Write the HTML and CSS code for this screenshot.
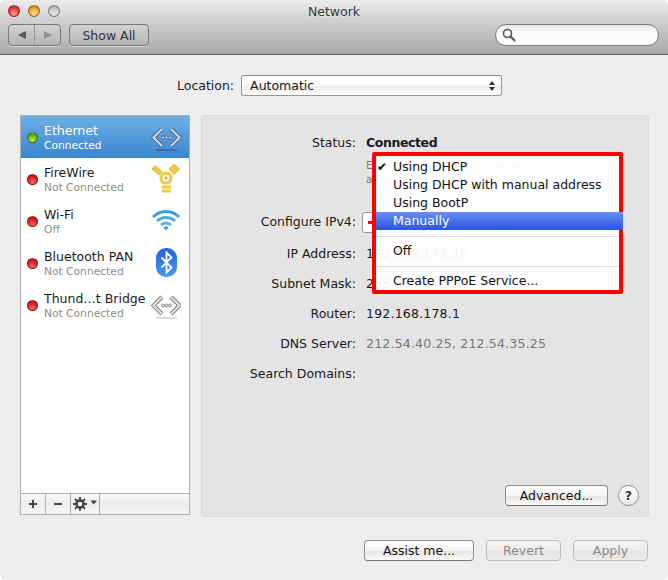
FILE: index.html
```html
<!DOCTYPE html>
<html lang="en">
<head>
    <meta charset="UTF-8">
    <title>Network</title>
    <link rel="stylesheet" href="styles.css">
</head>
<body>
    <div class="window">
        <div class="toolbar">
            <div class="title-row">
                <div class="lights">
                    <span class="light light-close"></span>
                    <span class="light light-min"></span>
                    <span class="light light-zoom"></span>
                </div>
                <div class="window-title">Network</div>
            </div>
            <div class="tool-row">
                <div class="nav-buttons">
                    <span class="nav-btn"><span class="arrow-left"></span></span>
                    <span class="nav-btn"><span class="arrow-right"></span></span>
                </div>
                <button class="show-all">Show All</button>
                <div class="search">
                    <svg width="14" height="14" viewBox="0 0 14 14">
                        <circle cx="5.5" cy="5.5" r="4" fill="none" stroke="#555" stroke-width="1.6"/>
                        <path d="M8.5 8.5 L12.5 12.5" stroke="#555" stroke-width="2.2" stroke-linecap="round"/>
                    </svg>
                </div>
            </div>
        </div>

        <div class="content">
            <div class="location-row">
                <span class="location-label">Location:</span>
                <div class="select location-select">
                    <span>Automatic</span>
                    <span class="updown"><i class="up"></i><i class="down"></i></span>
                </div>
            </div>

            <div class="main">
                <div class="sidebar">
                    <div class="service-list">
                        <div class="service selected">
                            <span class="led led-green"></span>
                            <div class="service-text">
                                <div class="service-name">Ethernet</div>
                                <div class="service-state">Connected</div>
                            </div>
                            <svg class="service-icon" width="30" height="30" viewBox="0 0 30 30">
                                <path d="M11 7 L2.5 15.5 L11 24 M20 7 L28.5 15.5 L20 24" fill="none" stroke="#44658a" stroke-width="4"/>
                                <path d="M11 7 L2.5 15.5 L11 24 M20 7 L28.5 15.5 L20 24" fill="none" stroke="#cfd9e4" stroke-width="2.2"/>
                                <circle cx="12" cy="15.5" r="1.5" fill="#cfd9e4" stroke="#44658a" stroke-width=".8"/>
                                <circle cx="15.5" cy="15.5" r="1.5" fill="#cfd9e4" stroke="#44658a" stroke-width=".8"/>
                                <circle cx="19" cy="15.5" r="1.5" fill="#cfd9e4" stroke="#44658a" stroke-width=".8"/>
                                <path d="M5 28 H26" stroke="#3c6ca4" stroke-width="2"/>
                            </svg>
                        </div>
                        <div class="service">
                            <span class="led led-red"></span>
                            <div class="service-text">
                                <div class="service-name">FireWire</div>
                                <div class="service-state">Not Connected</div>
                            </div>
                            <svg class="service-icon" width="30" height="30" viewBox="0 0 30 30">
                                <path d="M1 5 L4 1.5 L11 7.5 L8 11 Z M18 5 L23 0 L28.5 5 L23 10.5 Z" fill="#f3c93f" stroke="#c79c2c" stroke-width=".6"/>
                                <circle cx="15" cy="14" r="5" fill="none" stroke="#f3c93f" stroke-width="3.2"/>
                                <circle cx="15" cy="14" r="1.5" fill="#c79c2c"/>
                                <rect x="11" y="21.5" width="9" height="3" fill="#f3c93f"/>
                                <rect x="11" y="25.5" width="9" height="3" fill="#f3c93f"/>
                            </svg>
                        </div>
                        <div class="service">
                            <span class="led led-red"></span>
                            <div class="service-text">
                                <div class="service-name">Wi-Fi</div>
                                <div class="service-state">Off</div>
                            </div>
                            <svg class="service-icon" width="30" height="30" viewBox="0 0 30 30">
                                <path d="M2 11 A18 18 0 0 1 28 11" fill="none" stroke="#3d9be0" stroke-width="3"/>
                                <path d="M6 15 A13 13 0 0 1 24 15" fill="none" stroke="#4aa8ea" stroke-width="3"/>
                                <path d="M10 19 A7 7 0 0 1 20 19" fill="none" stroke="#5ab4ee" stroke-width="3"/>
                                <path d="M12.5 21.5 L15 24.5 L17.5 21.5 A3.6 3.6 0 0 0 12.5 21.5 Z" fill="#3d9be0"/>
                            </svg>
                        </div>
                        <div class="service">
                            <span class="led led-red"></span>
                            <div class="service-text">
                                <div class="service-name">Bluetooth PAN</div>
                                <div class="service-state">Not Connected</div>
                            </div>
                            <svg class="service-icon" width="30" height="30" viewBox="0 0 30 30">
                                <defs>
                                    <linearGradient id="btFill" x1="0" y1="0" x2="0" y2="1">
                                        <stop offset="0" stop-color="#1d62d8"/>
                                        <stop offset="1" stop-color="#4b96f2"/>
                                    </linearGradient>
                                </defs>
                                <rect x="5" y="0" width="21" height="29" rx="10" fill="url(#btFill)"/>
                                <path d="M10.5 9.5 L20.5 19.5 L15.5 24.5 V4.5 L20.5 9.5 L10.5 19.5" fill="none" stroke="#fff" stroke-width="1.8"/>
                            </svg>
                        </div>
                        <div class="service">
                            <span class="led led-red"></span>
                            <div class="service-text">
                                <div class="service-name">Thund…t Bridge</div>
                                <div class="service-state">Not Connected</div>
                            </div>
                            <svg class="service-icon" width="30" height="30" viewBox="0 0 30 30">
                                <path d="M11 7 L2.5 15.5 L11 24 M20 7 L28.5 15.5 L20 24" fill="none" stroke="#777" stroke-width="4"/>
                                <path d="M11 7 L2.5 15.5 L11 24 M20 7 L28.5 15.5 L20 24" fill="none" stroke="#e2e2e2" stroke-width="2.2"/>
                                <circle cx="12" cy="15.5" r="1.5" fill="#e2e2e2" stroke="#777" stroke-width=".8"/>
                                <circle cx="15.5" cy="15.5" r="1.5" fill="#e2e2e2" stroke="#777" stroke-width=".8"/>
                                <circle cx="19" cy="15.5" r="1.5" fill="#e2e2e2" stroke="#777" stroke-width=".8"/>
                                <path d="M5 28 H26" stroke="#ddd" stroke-width="2"/>
                            </svg>
                        </div>
                    </div>
                    <div class="list-actions">
                        <span class="action action-add">
                            <svg width="10" height="10" viewBox="0 0 10 10"><path d="M5 1 V9 M1 5 H9" stroke="#444" stroke-width="2"/></svg>
                        </span>
                        <span class="action action-remove">
                            <svg width="10" height="10" viewBox="0 0 10 10"><path d="M1 5 H9" stroke="#444" stroke-width="2"/></svg>
                        </span>
                        <span class="action action-gear">
                            <svg width="24" height="14" viewBox="0 0 24 14">
                                <circle cx="7" cy="7" r="3.6" fill="none" stroke="#444" stroke-width="2.6"/>
                                <path d="M7 0 V14 M0 7 H14 M2 2 L12 12 M12 2 L2 12" stroke="#444" stroke-width="1.8" stroke-dasharray="2.4 9.2 2.4 0"/>
                                <path d="M17.5 3.5 H24 L20.7 7.5 Z" fill="#444"/>
                            </svg>
                        </span>
                    </div>
                </div>

                <div class="panel">
                    <div class="details">
                        <div class="row row-status"><span class="label">Status:</span><span class="value strong">Connected</span></div>
                        <div class="row row-desc"><span class="label"></span><span class="value small">Ethernet is currently active and has the IP address 192.168.178.16.</span></div>
                        <div class="row row-config"><span class="label">Configure IPv4:</span><span class="config-select"></span></div>
                        <div class="row"><span class="label">IP Address:</span><span class="value">192.168.178.16</span></div>
                        <div class="row"><span class="label">Subnet Mask:</span><span class="value">255.255.255.0</span></div>
                        <div class="row"><span class="label">Router:</span><span class="value">192.168.178.1</span></div>
                        <div class="row"><span class="label">DNS Server:</span><span class="value muted">212.54.40.25, 212.54.35.25</span></div>
                        <div class="row"><span class="label">Search Domains:</span><span class="value"></span></div>
                    </div>
                    <div class="panel-footer">
                        <button class="btn btn-advanced">Advanced...</button>
                        <span class="help">?</span>
                    </div>
                </div>
            </div>

            <div class="footer">
                <button class="btn btn-assist">Assist me...</button>
                <button class="btn btn-off btn-revert">Revert</button>
                <button class="btn btn-off btn-apply">Apply</button>
            </div>
        </div>

        <!-- popup menu with the red annotation over it -->
        <span class="callout-line"></span>
        <div class="menu">
            <div class="menu-item"><span class="check">✔</span>Using DHCP</div>
            <div class="menu-item">Using DHCP with manual address</div>
            <div class="menu-item">Using BootP</div>
            <div class="menu-item active">Manually</div>
            <div class="menu-sep"></div>
            <div class="menu-item">Off</div>
            <div class="menu-sep"></div>
            <div class="menu-item">Create PPPoE Service...</div>
        </div>
    </div>
</body>
</html>
```

FILE: styles.css
```css
* {
    box-sizing: border-box;
}
body {
    margin: 0;
    background: #fff;
    font-family: "DejaVu Sans", "Liberation Sans", sans-serif;
    font-size: 12.5px;
    color: #1a1a1a;
}
.window {
    position: relative;
    width: 668px;
    height: 580px;
    background: #ededed;
    border-radius: 5px 5px 6px 6px;
    overflow: hidden;
    display: flex;
    flex-direction: column;
}

/* toolbar */
.toolbar {
    height: 55px;
    flex: none;
    background: linear-gradient(#ececec, #d6d6d6 30%, #a9a9a9);
    border-bottom: 1px solid #5e5e5e;
}
.title-row {
    position: relative;
    height: 24px;
}
.lights {
    display: flex;
    gap: 8px;
    padding: 5px 0 0 8px;
}
.light {
    width: 12px;
    height: 12px;
    border-radius: 50%;
    border: 1px solid rgba(0, 0, 0, 0.35);
}
.light-close {
    background: radial-gradient(circle at 50% 75%, #ffa8a0, #e4343c 60%, #b8242c);
}
.light-min {
    background: radial-gradient(circle at 50% 75%, #ffe49a, #ec9f2e 60%, #b87a20);
}
.light-zoom {
    background: radial-gradient(circle at 50% 75%, #eee, #bbb 70%, #999);
}
.window-title {
    position: absolute;
    top: 4px;
    left: 0;
    right: 0;
    text-align: center;
    color: #333;
    text-shadow: 0 1px 0 rgba(255, 255, 255, 0.5);
}
.tool-row {
    display: flex;
    align-items: center;
    padding-left: 8px;
}
.nav-buttons {
    width: 53px;
    height: 22px;
    display: flex;
    border: 1px solid #777;
    border-radius: 4px;
    background: linear-gradient(#d2d2d2, #b4b4b4);
    box-shadow: 0 1px 0 rgba(255, 255, 255, 0.4);
}
.nav-btn {
    flex: 1;
    display: flex;
    align-items: center;
    justify-content: center;
}
.nav-btn + .nav-btn {
    border-left: 1px solid #999;
}
.arrow-left {
    border: 4.5px solid transparent;
    border-left: 0;
    border-right: 8px solid #555;
}
.arrow-right {
    border: 4.5px solid transparent;
    border-right: 0;
    border-left: 8px solid #8e8e8e;
}
.show-all {
    width: 80px;
    height: 22px;
    margin-left: 8px;
    padding: 0;
    font: inherit;
    color: #333;
    border: 1px solid #777;
    border-radius: 4px;
    background: linear-gradient(#d2d2d2, #b4b4b4);
    box-shadow: 0 1px 0 rgba(255, 255, 255, 0.4);
}
.search {
    width: 164px;
    height: 22px;
    margin-left: 346px;
    padding: 3px 0 0 6px;
    border: 1px solid #7f7f7f;
    border-radius: 11px;
    background: linear-gradient(#e8e8e8, #fbfbfb 40%);
}

/* location */
.content {
    flex: 1;
    display: flex;
    flex-direction: column;
    padding: 0 19px 0 20px;
}
.location-row {
    height: 60px;
    flex: none;
    display: flex;
    align-items: center;
    padding: 1px 0 0 157px;
    gap: 7px;
}
.select {
    display: flex;
    align-items: center;
    justify-content: space-between;
    border: 1px solid #979797;
    border-top-color: #8a8a8a;
    border-radius: 3px;
    background: linear-gradient(#fff, #f8f8f8 50%, #ececec 55%, #fff);
}
.location-select {
    width: 261px;
    height: 21px;
    padding: 0 6px 0 8px;
}
.updown {
    display: flex;
    flex-direction: column;
    gap: 2px;
}
.updown i {
    display: block;
    border: 3px solid transparent;
}
.updown .up {
    border-top: 0;
    border-bottom: 4px solid #333;
}
.updown .down {
    border-bottom: 0;
    border-top: 4px solid #333;
}

/* main columns */
.main {
    display: flex;
    gap: 11px;
    height: 402px;
}
.sidebar {
    width: 170px;
    height: 400px;
    display: flex;
    flex-direction: column;
    border: 1px solid #aeaeae;
    background: #fff;
}
.service-list {
    flex: 1;
}
.service {
    height: 42px;
    display: flex;
    align-items: center;
    padding: 0 8px 0 7px;
}
.service.selected {
    background: linear-gradient(#6db0e6, #3a85cf);
    color: #fff;
}
.service-text {
    flex: 1;
    align-self: flex-start;
    margin-left: 6px;
    padding-top: 7px;
    white-space: nowrap;
}
.service-name {
    height: 15px;
    line-height: 15px;
}
.service-state {
    font-size: 10.7px;
    line-height: 15px;
    color: #8c8c8c;
}
.selected .service-state {
    color: #fff;
}
.service-icon {
    flex: none;
}
.led {
    flex: none;
    width: 11px;
    height: 11px;
    margin-left: -1px;
    border-radius: 50%;
    border: 1px solid rgba(0, 0, 0, 0.35);
}
.led-red {
    background: radial-gradient(circle at 50% 80%, #ff6a60, #d8151f 65%);
}
.led-green {
    background: radial-gradient(circle at 50% 80%, #b5f04a, #59a80d 65%);
}
.list-actions {
    height: 21px;
    flex: none;
    display: flex;
    border-top: 1px solid #aeaeae;
    background: linear-gradient(#fafafa, #ececec 50%, #f7f7f7);
}
.action {
    display: flex;
    align-items: center;
    justify-content: center;
    border-right: 1px solid #aeaeae;
}
.action-add,
.action-remove {
    width: 25px;
}
.action-gear {
    width: 29px;
}

/* right panel */
.panel {
    flex: 1;
    display: flex;
    flex-direction: column;
    background: #e4e4e4;
    border: 1px solid #d9d9d9;
    border-radius: 4px;
}
.details {
    flex: 1;
    padding-top: 12px;
}
.row {
    display: grid;
    grid-template-columns: 154px 1fr;
    column-gap: 10px;
    height: 30px;
    line-height: 30px;
}
.row-desc {
    height: 49px;
}
.row-config {
    height: 32px;
}
.label {
    text-align: right;
    white-space: nowrap;
}
.value {
    letter-spacing: 0.2px;
}
.strong {
    font-weight: bold;
    letter-spacing: -0.4px;
}
.muted {
    color: #777;
}
.small {
    font-size: 10.5px;
    line-height: 14px;
    letter-spacing: 0;
    color: #777;
    padding-right: 24px;
}
.config-select {
    display: block;
    width: 60px;
    height: 21px;
    margin: 5px 0 0 -4px;
    border: 1px solid #979797;
    border-radius: 3px;
    background: #fff;
}
.panel-footer {
    display: flex;
    align-items: center;
    padding: 0 9px 10px 0;
    justify-content: flex-end;
    gap: 10px;
}
.btn {
    height: 21px;
    padding: 0;
    font: inherit;
    color: #111;
    border: 1px solid #8f8f8f;
    border-bottom-color: #777;
    border-radius: 4px;
    background: linear-gradient(#fff, #f4f4f4 50%, #e6e6e6 55%, #fafafa);
}
.btn-advanced {
    width: 103px;
}
.help {
    width: 21px;
    height: 21px;
    border-radius: 50%;
    border: 1px solid #8f8f8f;
    background: linear-gradient(#fff, #e9e9e9);
    text-align: center;
    line-height: 19px;
    font-weight: bold;
    color: #333;
}
.footer {
    display: flex;
    justify-content: flex-end;
    gap: 12px;
    margin-top: 23px;
    padding-right: 1px;
}
.btn-assist {
    width: 110px;
}
.btn-revert,
.btn-apply {
    width: 75px;
}
.btn-off {
    color: #8a8a8a;
    border-color: #bdbdbd;
    background: linear-gradient(#f4f4f4, #ececec 50%, #e4e4e4 55%, #ededed);
}

/* popup menu + red annotation */
.callout-line {
    position: absolute;
    left: 368px;
    top: 221px;
    width: 6px;
    height: 3px;
    background: #f00;
}
.menu {
    position: absolute;
    left: 372px;
    top: 152px;
    width: 251px;
    height: 142px;
    padding-top: 2px;
    border: 4px solid #f00;
    border-radius: 2px;
    background: rgba(255, 255, 255, 0.95);
}
.menu-item {
    position: relative;
    height: 18px;
    line-height: 18px;
    padding-left: 17px;
    white-space: nowrap;
    color: #111;
}
.menu-item.active {
    background: linear-gradient(#6a8df6, #2a55e0);
    color: #fff;
    margin-right: -4px;
}
.check {
    position: absolute;
    left: 1px;
    font-size: 12px;
}
.menu-sep {
    height: 1px;
    margin: 6px 0 5px;
    background: #ddd;
}
```
